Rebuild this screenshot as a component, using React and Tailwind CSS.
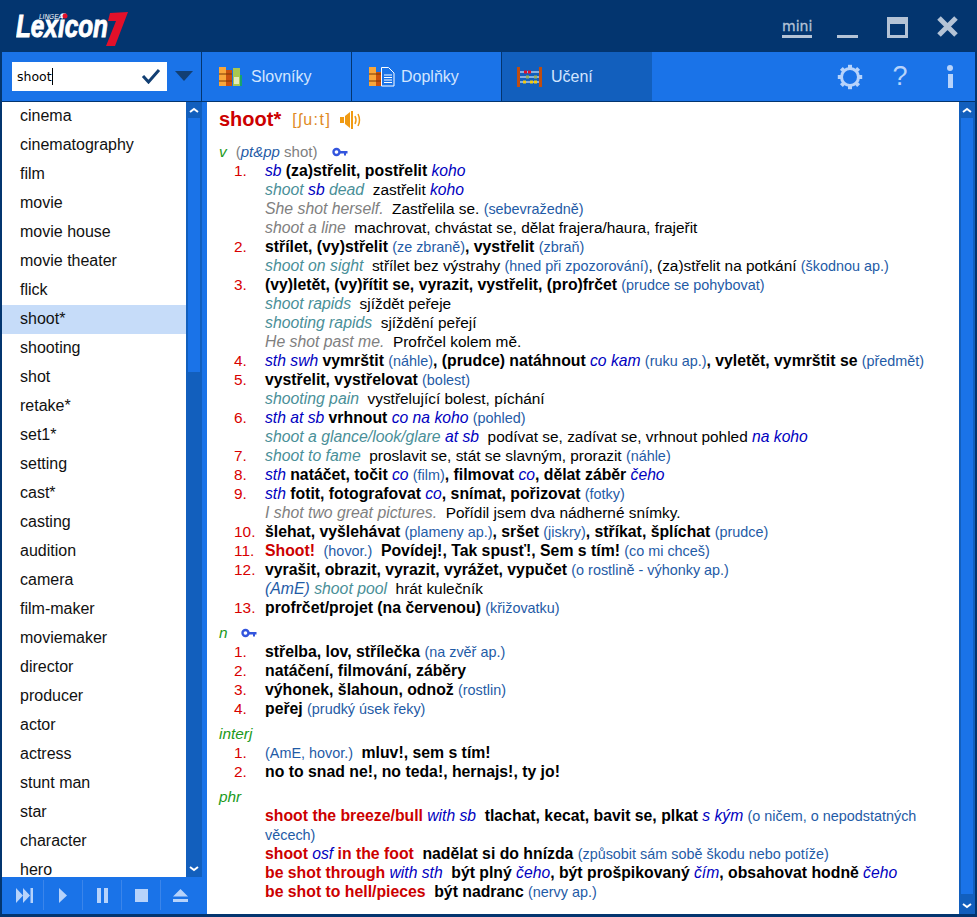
import React from 'react';

const words = ['cinema', 'cinematography', 'film', 'movie', 'movie house', 'movie theater', 'flick', 'shoot*', 'shooting', 'shot', 'retake*', 'set1*', 'setting', 'cast*', 'casting', 'audition', 'camera', 'film-maker', 'moviemaker', 'director', 'producer', 'actor', 'actress', 'stunt man', 'star', 'character', 'hero'];

// Small helpers for the dictionary markup
const B = ({ children }) => <b className="text-black text-[15.8px] leading-none">{children}</b>;
const I = ({ children }) => <i className="text-[#0000c0] text-[15.7px] leading-none">{children}</i>;
const Ex = ({ children }) => <i className="text-[#4a8f98] text-[15.8px] leading-none">{children}</i>;
const Gr = ({ children }) => <i className="text-[#808080] text-[15.8px] leading-none">{children}</i>;
const N = ({ children }) => <span className="text-[#1f5ba6] text-[14.4px] leading-none">{children}</span>;
const Phr = ({ children }) => <b className="text-[#cc0000] text-[15.8px] leading-none">{children}</b>;

function KeyIcon({ className }) {
  return (
    <svg width="16" height="10" viewBox="0 0 16 10" className={className}>
      <circle cx="4.5" cy="5" r="3" fill="none" stroke="#3355dd" strokeWidth="2.4" />
      <path d="M8 4h7.500v2.500h-1.500v2h-2v-2h-4z" fill="#3355dd" />
    </svg>
  );
}

function Speaker({ color = '#f09a12' }) {
  return (
    <svg width="22" height="18" viewBox="0 0 22 18">
      <path d="M0 6h4v6H0zM5 5l5-4v16l-5-4z" fill={color} />
      <rect x="11" y="0" width="2" height="18" fill={color} />
      <path d="M15 5q2 4 0 8M18 3q3 6 0 12" fill="none" stroke={color} strokeWidth="1.500" />
    </svg>
  );
}

function BooksIcon() {
  return (
    <svg width="24" height="20" viewBox="0 0 24 20">
      <rect x="0" y="0" width="7" height="19" fill="#f9a63a" />
      <rect x="7" y="3" width="6" height="16" fill="#c9500e" />
      <path d="M0 7h13M0 14h13" stroke="#7a3806" strokeWidth="1" />
      <rect x="14" y="1" width="7" height="18" fill="#a9c74f" />
      <rect x="15" y="10" width="5" height="7" fill="#e4eab8" />
      <rect x="21" y="8" width="2" height="11" fill="#19a36b" />
    </svg>
  );
}

function SupplementIcon() {
  return (
    <svg width="26" height="20" viewBox="0 0 26 20">
      <rect x="0" y="0" width="7" height="19" fill="#f9a63a" />
      <rect x="7" y="5" width="5" height="14" fill="#c9500e" />
      <path d="M0 7h12M0 14h12" stroke="#7a3806" strokeWidth="1" />
      <path d="M12.500.5h7l5.500 5.500v13h-12.500z" fill="#1a73e8" stroke="#fff" />
      <path d="M15 8h8M15 10.500h8M15 13h8M15 15.500h8" stroke="#fff" />
    </svg>
  );
}

function AbacusIcon() {
  return (
    <svg width="26" height="20" viewBox="0 0 26 20">
      <rect x="0" y="0" width="3" height="20" fill="#c04d10" />
      <rect x="22" y="0" width="3" height="20" fill="#c04d10" />
      <path d="M3 5h19M3 10h19M3 15h19" stroke="#fff" />
      <path d="M7 3.500h3v3H7zM11 3.500h3v3h-3z" fill="#e0102a" />
      <path d="M9 8.500h3v3H9zM17 8.500h3v3h-3z" fill="#9cb45a" />
      <path d="M6 13.500h3v3H6zM13 13.500h3v3h-3zM17 13.500h3v3h-3z" fill="#f4cc10" />
    </svg>
  );
}

function Gear() {
  return (
    <svg width="26" height="26" viewBox="0 0 26 26">
      <circle cx="13" cy="13" r="8.500" fill="none" stroke="#b7d3fb" strokeWidth="3" />
      {[0, 45, 90, 135, 180, 225, 270, 315].map(a => (
        <rect key={a} x="11" y="0.800" width="4" height="3.500" fill="#b7d3fb" transform={`rotate(${a} 13 13)`} />
      ))}
    </svg>
  );
}

function Logo() {
  return (
    <svg width="116" height="38" viewBox="0 0 116 38" className="block">
      <text x="0" y="25" fontSize="32" fontWeight="bold" fontStyle="italic" fill="#fff" stroke="#fff" strokeWidth="1" transform="scale(0.76 1)" fontFamily="'Liberation Sans', sans-serif">Lexicon</text>
      <text x="23" y="6.500" fontSize="6.500" fontStyle="italic" fill="#fff" fontFamily="'Liberation Sans', sans-serif">LINGEA</text>
      <circle cx="49" cy="4" r="2.500" fill="#e3102a" />
      <path d="M94 1l18-1-13 34h-9l10-25h-8z" fill="#e3102a" />
    </svg>
  );
}

function ScrollArrow({ up }) {
  return (
    <div className="h-4 flex items-center justify-center shrink-0">
      <svg width="10" height="6" viewBox="0 0 10 6">
        <path d={up ? 'M1 5l4-3 4 3' : 'M1 1l4 3 4-3'} fill="none" stroke="#fff" strokeWidth="2" />
      </svg>
    </div>
  );
}

function Tab({ icon, label }) {
  return (
    <div className="w-[150px] flex items-center border-r border-[#03356f] pl-[17px]">
      <div className="w-[32px] flex items-center">{icon}</div>
      <span className="text-[16px] text-[#d2e5ff]">{label}</span>
    </div>
  );
}

function Sense({ n, children }) {
  return (
    <div className="flex">
      <div className="w-[46px] pl-[15px] text-[#d80000] shrink-0">{n}.</div>
      <div className="flex-1">{children}</div>
    </div>
  );
}

const Line = ({ children }) => <div className="pl-[46px]">{children}</div>;
const Pos = ({ children }) => <i className="text-[#1b9a1b]">{children}</i>;

export default function App() {
  return (
    <div className="w-[977px] h-[917px] bg-[#03356f] flex flex-col overflow-hidden font-['Liberation_Sans',Arial,sans-serif]">
      {/* title bar */}
      <div className="h-[52px] flex items-start justify-between shrink-0">
        <div className="pl-[16px] pt-[12px]"><Logo /></div>
        <div className="flex items-start text-[#b4c3d6] pr-[19px]">
          <div className="mt-[17px] w-[30px] border-b-[3px] border-[#b4c3d6] font-['DejaVu_Sans',sans-serif] text-[14px] leading-[18px] text-center mr-[25px] [-webkit-text-stroke:0.3px_#b4c3d6]">mini</div>
          <div className="mt-[35px] w-[21px] h-[3px] bg-[#b4c3d6] mr-[29px]" />
          <div className="mt-[17px] w-[21px] h-[21px] border-[3px] border-t-[7px] border-[#b4c3d6] mr-[29px]" />
          <svg width="21" height="21" viewBox="0 0 21 21" className="mt-[16px]">
            <path d="M2 2l17 17M19 2L2 19" stroke="#b4c3d6" strokeWidth="5" />
          </svg>
        </div>
      </div>

      {/* toolbar */}
      <div className="ml-[2px] mr-[2px] h-[50px] shrink-0 bg-[#1a73e8] border-b border-[#03356f] flex">
        <div className="w-[200px] border-r border-[#03356f] flex items-center pl-[10px] pb-[1px]">
          <div className="w-[155px] h-[29px] bg-white flex items-center justify-between pl-[5px] pr-[6px]">
            <span className="text-black font-['DejaVu_Sans',sans-serif] text-[12.500px] border-r border-black leading-[17px]">shoot</span>
            <svg width="20" height="16" viewBox="0 0 20 16">
              <path d="M2 8l5.500 6L18 2" fill="none" stroke="#123f73" strokeWidth="3" />
            </svg>
          </div>
          <svg width="18" height="10" viewBox="0 0 18 10" className="ml-[8px]">
            <path d="M0 0h18L9 10z" fill="#123f73" />
          </svg>
        </div>
        <Tab icon={<BooksIcon />} label="Slovníky" />
        <Tab icon={<SupplementIcon />} label="Doplňky" />
        <div className="w-[150px] flex items-center bg-[#125fbd] pl-[15px]">
          <div className="w-[34px] flex items-center"><AbacusIcon /></div>
          <span className="text-[16px] text-[#d2e5ff]">Učení</span>
        </div>
        <div className="flex-1 flex items-center justify-end pr-[22px]">
          <Gear />
          <span className="ml-[27px] w-[20px] text-center text-[27px] text-[#b7d3fb] leading-none">?</span>
          <div className="ml-[37px] w-[6px] flex flex-col items-center gap-[3px]">
            <div className="w-[6px] h-[6px] rounded-full bg-[#b7d3fb]" />
            <div className="w-[5px] h-[14px] bg-[#b7d3fb]" />
          </div>
        </div>
      </div>

      {/* body */}
      <div className="h-[812px] ml-[2px] mr-[2px] flex shrink-0">
        {/* word list */}
        <div className="w-[205px] shrink-0 bg-[#1a73e8] flex flex-col">
          <div className="h-[775px] flex shrink-0">
            <div className="w-[184px] bg-white overflow-hidden">
              {words.map(w => (
                <div key={w} className={`h-[29px] leading-[27px] pl-[18px] text-[16px] text-[#111] ${w === 'shoot*' ? 'bg-[#c6dcf9]' : ''}`}>{w}</div>
              ))}
            </div>
            <div className="w-[16px] bg-[#125fbd] flex flex-col">
              <ScrollArrow up />
              <div className="h-[254px] bg-[#1a73e8] mx-[2px]" />
              <div className="flex-1" />
              <ScrollArrow />
            </div>
          </div>
          <div className="flex-1 flex items-center pb-[1px]">
            <div className="w-[42px] h-[30px] flex items-center justify-center pl-[4px] border-r border-[#3b85ea]">
              <svg width="17" height="15" viewBox="0 0 17 15"><path d="M0 0l7 7.500L0 15zM7 0l7 7.500L7 15zM14.500 0H17v15h-2.500z" fill="#b7d3fb" /></svg>
            </div>
            <div className="w-[39px] h-[30px] flex items-center justify-center border-r border-[#3b85ea]">
              <svg width="8" height="15" viewBox="0 0 8 15"><path d="M0 0l8 7.500L0 15z" fill="#b7d3fb" /></svg>
            </div>
            <div className="w-[39px] h-[30px] flex items-center justify-center gap-[3px] border-r border-[#3b85ea]">
              <div className="w-[4px] h-[15px] bg-[#b7d3fb]" />
              <div className="w-[4px] h-[15px] bg-[#b7d3fb]" />
            </div>
            <div className="w-[39px] h-[30px] flex items-center justify-center border-r border-[#3b85ea]">
              <div className="w-[13px] h-[13px] bg-[#b7d3fb]" />
            </div>
            <div className="w-[39px] h-[30px] flex items-center justify-center">
              <svg width="15" height="13" viewBox="0 0 15 13"><path d="M7.500 0L15 7.500H0zM0 10h15v3H0z" fill="#b7d3fb" /></svg>
            </div>
          </div>
        </div>

        {/* entry */}
        <div className="flex-1 bg-white overflow-hidden pl-[12px] text-[15.4px] leading-[19px] text-black">
          <div className="h-[35px] flex items-center">
            <b className="text-[20px] text-[#cc0000]">shoot*</b>
            <span className="ml-[11px] text-[16px] text-[#e08a1e] tracking-[1.500px]">[ʃu:t]</span>
            <span className="ml-[9px]"><Speaker /></span>
          </div>
          <div className="mt-[5px] flex items-center h-[19px]">
            <Pos>v</Pos>
            <span className="ml-[9px] text-[#808080] text-[15px]">(<i className="text-[#1f5ba6]">pt&amp;pp</i> shot)</span>
            <KeyIcon className="ml-[15px]" />
          </div>
          <Sense n="1"><I>sb</I> <B>(za)střelit, postřelit</B> <I>koho</I></Sense>
          <Line><Ex>shoot <I>sb</I> dead</Ex> &nbsp;zastřelit <I>koho</I></Line>
          <Line><Gr>She shot herself.</Gr> &nbsp;Zastřelila se. <N>(sebevražedně)</N></Line>
          <Line><Gr>shoot a line</Gr> &nbsp;machrovat, chvástat se, dělat frajera/haura, frajeřit</Line>
          <Sense n="2"><B>střílet, (vy)střelit</B> <N>(ze zbraně)</N><B>, vystřelit</B> <N>(zbraň)</N></Sense>
          <Line><Ex>shoot on sight</Ex> &nbsp;střílet bez výstrahy <N>(hned při zpozorování)</N>, (za)střelit na potkání <N>(škodnou ap.)</N></Line>
          <Sense n="3"><B>(vy)letět, (vy)řítit se, vyrazit, vystřelit, (pro)frčet</B> <N>(prudce se pohybovat)</N></Sense>
          <Line><Ex>shoot rapids</Ex> &nbsp;sjíždět peřeje</Line>
          <Line><Ex>shooting rapids</Ex> &nbsp;sjíždění peřejí</Line>
          <Line><Gr>He shot past me.</Gr> &nbsp;Profrčel kolem mě.</Line>
          <Sense n="4"><I>sth swh</I> <B>vymrštit</B> <N>(náhle)</N><B>, (prudce) natáhnout</B> <I>co kam</I> <N>(ruku ap.)</N><B>, vyletět, vymrštit se</B> <N>(předmět)</N></Sense>
          <Sense n="5"><B>vystřelit, vystřelovat</B> <N>(bolest)</N></Sense>
          <Line><Ex>shooting pain</Ex> &nbsp;vystřelující bolest, píchání</Line>
          <Sense n="6"><I>sth at sb</I> <B>vrhnout</B> <I>co na koho</I> <N>(pohled)</N></Sense>
          <Line><Ex>shoot a glance/look/glare <I>at sb</I></Ex> &nbsp;podívat se, zadívat se, vrhnout pohled <I>na koho</I></Line>
          <Sense n="7"><Ex>shoot to fame</Ex> &nbsp;proslavit se, stát se slavným, prorazit <N>(náhle)</N></Sense>
          <Sense n="8"><I>sth</I> <B>natáčet, točit</B> <I>co</I> <N>(film)</N><B>, filmovat</B> <I>co</I><B>, dělat záběr</B> <I>čeho</I></Sense>
          <Sense n="9"><I>sth</I> <B>fotit, fotografovat</B> <I>co</I><B>, snímat, pořizovat</B> <N>(fotky)</N></Sense>
          <Line><Gr>I shot two great pictures.</Gr> &nbsp;Pořídil jsem dva nádherné snímky.</Line>
          <Sense n="10"><B>šlehat, vyšlehávat</B> <N>(plameny ap.)</N><B>, sršet</B> <N>(jiskry)</N><B>, stříkat, šplíchat</B> <N>(prudce)</N></Sense>
          <Sense n="11"><Phr>Shoot!</Phr> &nbsp;<N>(hovor.)</N> &nbsp;<B>Povídej!, Tak spusť!, Sem s tím!</B> <N>(co mi chceš)</N></Sense>
          <Sense n="12"><B>vyrašit, obrazit, vyrazit, vyrážet, vypučet</B> <N>(o rostlině - výhonky ap.)</N></Sense>
          <Line><Ex><span className="text-[#1f5ba6]">(AmE)</span> shoot pool</Ex> &nbsp;hrát kulečník</Line>
          <Sense n="13"><B>profrčet/projet (na červenou)</B> <N>(křižovatku)</N></Sense>

          <div className="mt-[6px] flex items-center h-[19px]">
            <Pos>n</Pos>
            <KeyIcon className="ml-[13px]" />
          </div>
          <Sense n="1"><B>střelba, lov, střílečka</B> <N>(na zvěř ap.)</N></Sense>
          <Sense n="2"><B>natáčení, filmování, záběry</B></Sense>
          <Sense n="3"><B>výhonek, šlahoun, odnož</B> <N>(rostlin)</N></Sense>
          <Sense n="4"><B>peřej</B> <N>(prudký úsek řeky)</N></Sense>

          <div className="mt-[6px] h-[19px]"><Pos>interj</Pos></div>
          <Sense n="1"><N>(AmE, hovor.)</N> &nbsp;<B>mluv!, sem s tím!</B></Sense>
          <Sense n="2"><B>no to snad ne!, no teda!, hernajs!, ty jo!</B></Sense>

          <div className="mt-[6px] h-[19px]"><Pos>phr</Pos></div>
          <Line>
            <div className="pr-[24px]"><Phr>shoot the breeze/bull</Phr> <I>with sb</I> &nbsp;<B>tlachat, kecat, bavit se, plkat</B> <I>s kým</I> <N>(o ničem, o nepodstatných věcech)</N></div>
          </Line>
          <Line><Phr>shoot</Phr> <I>osf</I> <Phr>in the foot</Phr> &nbsp;<B>nadělat si do hnízda</B> <N>(způsobit sám sobě škodu nebo potíže)</N></Line>
          <Line><Phr>be shot through</Phr> <I>with sth</I> &nbsp;<B>být plný</B> <I>čeho</I><B>, být prošpikovaný</B> <I>čím</I><B>, obsahovat hodně</B> <I>čeho</I></Line>
          <Line><Phr>be shot to hell/pieces</Phr> &nbsp;<B>být nadranc</B> <N>(nervy ap.)</N></Line>
        </div>
        <div className="w-[16px] shrink-0 bg-[#125fbd] flex flex-col">
          <ScrollArrow up />
          <div className="h-[776px] bg-[#1a73e8] mx-[2px]" />
          <div className="flex-1" />
          <ScrollArrow />
        </div>
      </div>
    </div>
  );
}
